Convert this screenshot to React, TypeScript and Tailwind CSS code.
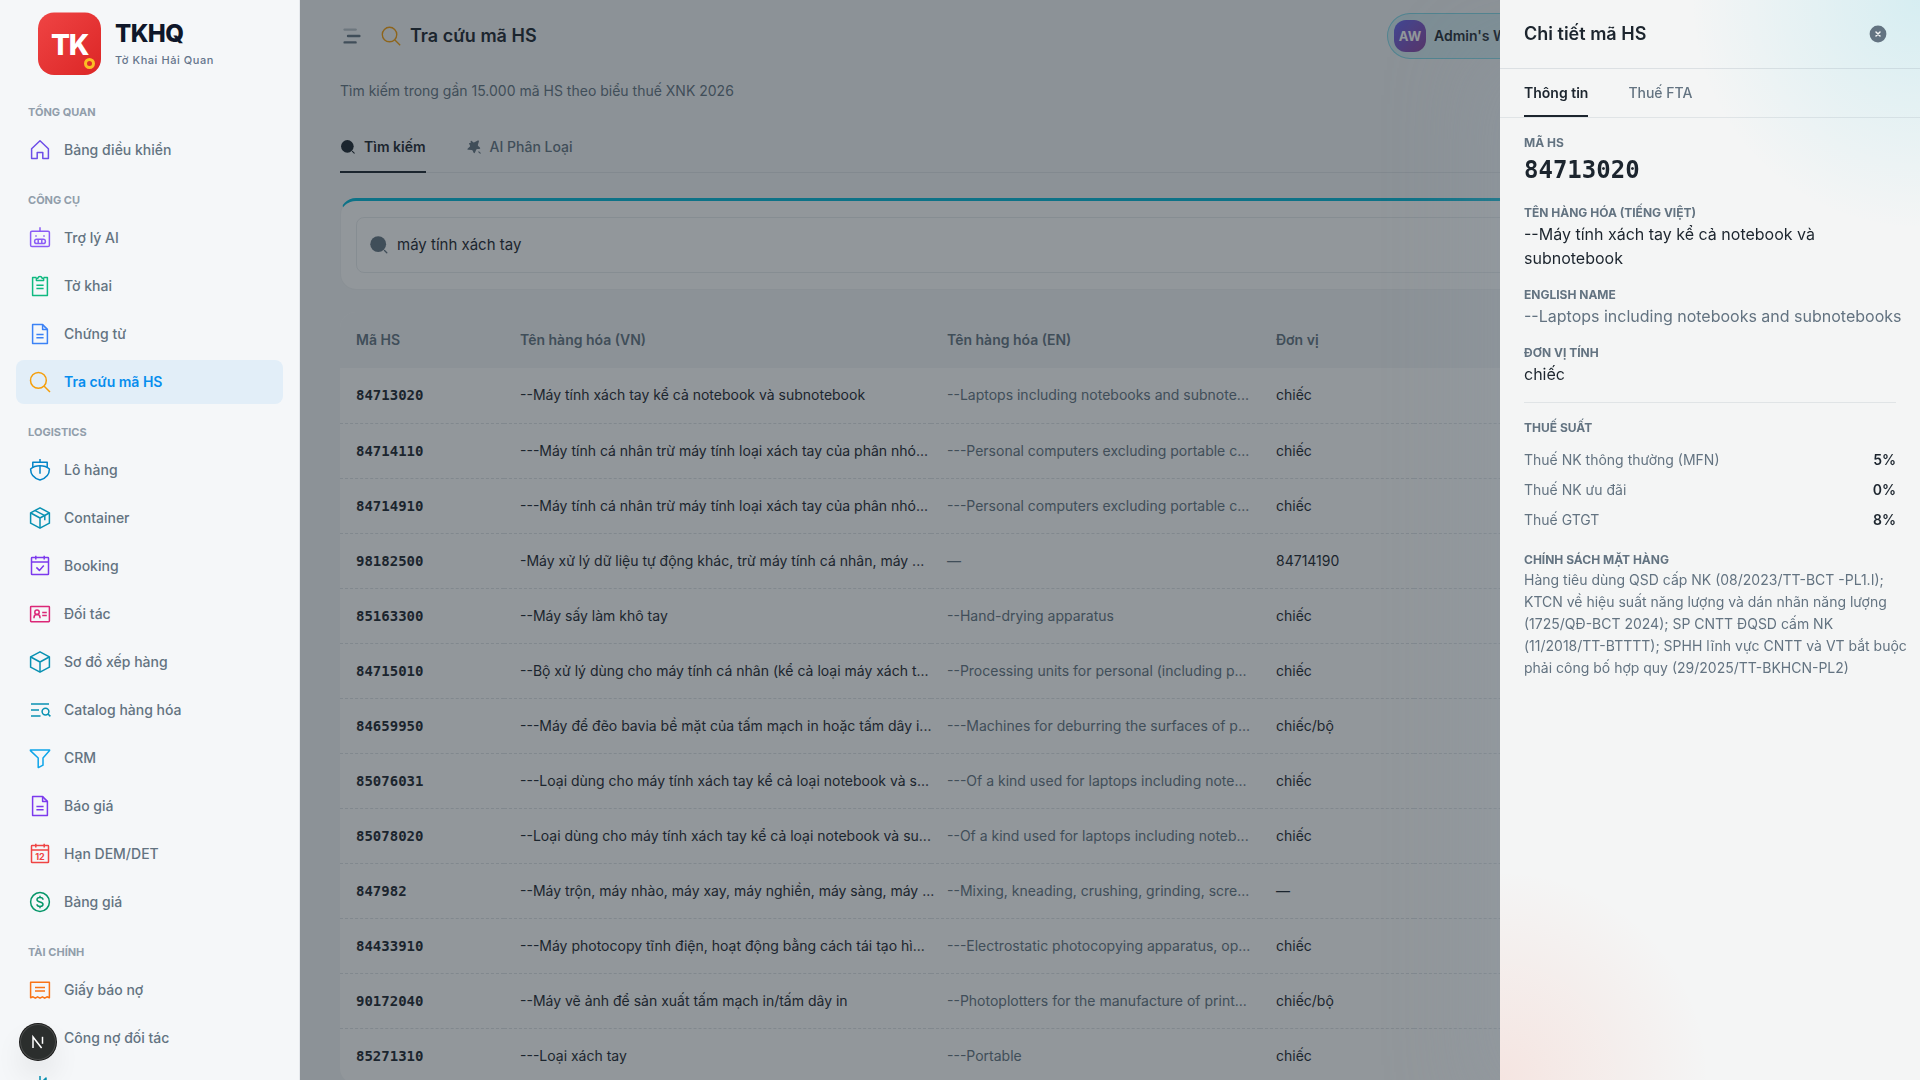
import { useState, type ReactNode } from "react";
import clsx from "clsx";

interface NavItem {
  label: string;
  color: string;
  icon: ReactNode;
  active?: boolean;
  iconOnly?: boolean;
}

interface NavGroup {
  title: string;
  items: NavItem[];
}

interface HsRow {
  code: string;
  vn: string;
  en: string;
  unit: string;
}

const DocGlyph = (
  <>
    <path d="M4.6 2.6h10l4.8 4.8v14H4.6z" />
    <path d="M14.6 2.6v4.8h4.8" />
    <path d="M8.4 12.6h7.2M8.4 15.8h7.2" />
  </>
);

const CubeGlyph = (
  <>
    <path d="M12 1.8 21.4 6.8v10.4L12 22.2 2.6 17.2V6.8z" />
    <path d="M2.8 7 12 12l9.2-5M12 12v10" />
  </>
);

const CalendarGlyph = (
  <>
    <rect x="3.5" y="3.6" width="17" height="17" rx="0.6" />
    <path d="M3.5 8h17M7.8 1.8v3.6M16.2 1.8v3.6" />
  </>
);

const SearchGlyph = (
  <>
    <circle cx="10.4" cy="10.4" r="7.9" />
    <path d="m16 16 6 6" />
  </>
);

const navGroups: NavGroup[] = [
  {
    title: "Tổng quan",
    items: [
      {
        label: "Bảng điều khiển",
        color: "text-[#6d4ee8]",
        icon: <path d="M3.6 20.6V10.8L12 2.8l8.4 8v9.8h-5.6v-6H9.2v6z" />,
      },
    ],
  },
  {
    title: "Công cụ",
    items: [
      {
        label: "Trợ lý AI",
        color: "text-[#8b5cf6]",
        icon: (
          <>
            <rect x="2.6" y="5.2" width="18.8" height="15.4" rx="1.4" />
            <path d="M12 1.2v4M8 9.2v1.6M16 9.2v1.6" />
            <rect x="6.6" y="13.2" width="10.8" height="4.4" rx="2.2" />
            <path d="M10.2 13.2v4.4M13.8 13.2v4.4" />
          </>
        ),
      },
      {
        label: "Tờ khai",
        color: "text-[#10b981]",
        icon: (
          <>
            <path d="M8.4 3.6H4.6v17.8h14.8V3.6h-3.8" />
            <path d="M8.4 6.4V4.2h1.4a2.3 2.3 0 0 1 4.4 0h1.4v2.2z" />
            <path d="M8.4 11.2h7.2M8.4 14.6h7.2" />
          </>
        ),
      },
      { label: "Chứng từ", color: "text-[#3b82f6]", icon: DocGlyph },
      { label: "Tra cứu mã HS", color: "text-[#f59e0b]", icon: SearchGlyph, active: true },
    ],
  },
  {
    title: "Logistics",
    items: [
      {
        label: "Lô hàng",
        color: "text-[#0284c7]",
        icon: (
          <>
            <path d="M12 1v3.2M4.8 9.4V4.2h14.4v5.2" />
            <path d="M12 7.8c3.8 0 7 1 9.4 3.2 0 5.6-3.6 9.4-9.4 11-5.8-1.6-9.4-5.4-9.4-11C5 8.800 8.200 7.800 12 7.800z" />
            <path d="M12 7.800v8" />
          </>
        ),
      },
      {
        label: "Container",
        color: "text-[#0891b2]",
        icon: (
          <>
            {CubeGlyph}
            <path d="m7.200 4.600 9.600 5v4.600" />
          </>
        ),
      },
      {
        label: "Booking",
        color: "text-[#7c3aed]",
        icon: (
          <>
            {CalendarGlyph}
            <path d="m8.400 13.400 3 3 4.400-4.800" />
          </>
        ),
      },
      {
        label: "Đối tác",
        color: "text-[#db2777]",
        icon: (
          <>
            <rect x="2.600" y="4.500" width="18.800" height="15.200" rx="0.600" />
            <circle cx="9" cy="10.200" r="2.200" />
            <path d="M6 16.200v-.8c0-1.700 1.200-3 3-3s3 1.300 3 3v.8M14.200 10.600h4.600M14.200 13.600h4.600" />
          </>
        ),
      },
      { label: "Sơ đồ xếp hàng", color: "text-[#0891b2]", icon: CubeGlyph },
      {
        label: "Catalog hàng hóa",
        color: "text-[#0891b2]",
        icon: (
          <>
            <path d="M3 6h18M3 12h8M3 18h9.500" />
            <circle cx="17.500" cy="13.600" r="3.400" />
            <path d="m20 16 2.400 2.400" />
          </>
        ),
      },
      {
        label: "CRM",
        color: "text-[#0ea5e9]",
        icon: <path d="M2.400 4h19.200v.6L15 12v7.200L10.800 21.400h-.6V12L2.400 4.600z" />,
      },
      { label: "Báo giá", color: "text-[#7c3aed]", icon: DocGlyph },
      {
        label: "Hạn DEM/DET",
        color: "text-[#ef4444]",
        icon: (
          <>
            {CalendarGlyph}
            <text
              x="12"
              y="18"
              textAnchor="middle"
              stroke="none"
              fill="currentColor"
              className="font-['Inter'] text-[9px] font-bold"
            >
              12
            </text>
          </>
        ),
      },
      {
        label: "Bảng giá",
        color: "text-[#059669]",
        icon: (
          <>
            <circle cx="12" cy="12" r="9.400" />
            <path d="M12 5.800v1.800M12 16.400v1.800M15 9.800c0-1.300-1-2.200-3-2.200s-3 .9-3 2.200c0 3 6 1.400 6 4.400 0 1.300-1 2.200-3 2.200s-3-.9-3-2.200" />
          </>
        ),
      },
    ],
  },
  {
    title: "Tài chính",
    items: [
      {
        label: "Giấy báo nợ",
        color: "text-[#f97316]",
        icon: (
          <>
            <path d="M2.600 19.800V4.200h18.800v15.600l-2.400-1-2.300 1.400-2.300-1.400-2.400 1.400-2.400-1.400-2.300 1.400L5 18.800z" />
            <path d="M7 9.600h10M7 13h10" />
          </>
        ),
      },
      { label: "Công nợ đối tác", color: "text-[#0891b2]", icon: <circle cx="12" cy="12" r="6" /> },
      {
        label: "Sổ quỹ",
        color: "text-[#0891b2]",
        icon: <path d="M2.600 21.400h18.800M6 18v-6M12 18V2M18 18V4l-3 3" />,
        iconOnly: true,
      },
    ],
  },
];

const rows: HsRow[] = [
  { code: "84713020", vn: "--Máy tính xách tay kể cả notebook và subnotebook", en: "--Laptops including notebooks and subnote...", unit: "chiếc" },
  { code: "84714110", vn: "---Máy tính cá nhân trừ máy tính loại xách tay của phân nhó...", en: "---Personal computers excluding portable c...", unit: "chiếc" },
  { code: "84714910", vn: "---Máy tính cá nhân trừ máy tính loại xách tay của phân nhó...", en: "---Personal computers excluding portable c...", unit: "chiếc" },
  { code: "98182500", vn: "-Máy xử lý dữ liệu tự động khác, trừ máy tính cá nhân, máy ...", en: "—", unit: "84714190" },
  { code: "85163300", vn: "--Máy sấy làm khô tay", en: "--Hand-drying apparatus", unit: "chiếc" },
  { code: "84715010", vn: "--Bộ xử lý dùng cho máy tính cá nhân (kể cả loại máy xách t...", en: "--Processing units for personal (including p...", unit: "chiếc" },
  { code: "84659950", vn: "---Máy để đẽo bavia bề mặt của tấm mạch in hoặc tấm dây i...", en: "---Machines for deburring the surfaces of p...", unit: "chiếc/bộ" },
  { code: "85076031", vn: "---Loại dùng cho máy tính xách tay kể cả loại notebook và s...", en: "---Of a kind used for laptops including note...", unit: "chiếc" },
  { code: "85078020", vn: "--Loại dùng cho máy tính xách tay kể cả loại notebook và su...", en: "--Of a kind used for laptops including noteb...", unit: "chiếc" },
  { code: "847982", vn: "--Máy trộn, máy nhào, máy xay, máy nghiền, máy sàng, máy ...", en: "--Mixing, kneading, crushing, grinding, scre...", unit: "—" },
  { code: "84433910", vn: "---Máy photocopy tĩnh điện, hoạt động bằng cách tái tạo hì...", en: "---Electrostatic photocopying apparatus, op...", unit: "chiếc" },
  { code: "90172040", vn: "--Máy vẽ ảnh để sản xuất tấm mạch in/tấm dây in", en: "--Photoplotters for the manufacture of print...", unit: "chiếc/bộ" },
  { code: "85271310", vn: "---Loại xách tay", en: "---Portable", unit: "chiếc" },
];

const taxRates = [
  { label: "Thuế NK thông thường (MFN)", value: "5%" },
  { label: "Thuế NK ưu đãi", value: "0%" },
  { label: "Thuế GTGT", value: "8%" },
];

function LineIcon({ className, children }: { className?: string; children: ReactNode }) {
  return (
    <svg
      viewBox="0 0 24 24"
      fill="none"
      stroke="currentColor"
      strokeWidth="1.500"
      strokeLinejoin="round"
      className={clsx("shrink-0", className)}
      aria-hidden="true"
    >
      {children}
    </svg>
  );
}

function SolidSearch({ className }: { className?: string }) {
  return (
    <svg viewBox="0 0 20 20" className={clsx("shrink-0", className)} aria-hidden="true">
      <circle cx="9.200" cy="9.200" r="7.900" fill="currentColor" />
      <path d="m15.500 15.500 2.300 2.300" stroke="currentColor" strokeWidth="1.300" strokeLinecap="round" />
    </svg>
  );
}

function Logo() {
  return (
    <svg viewBox="0 0 64 64" className="size-16 shrink-0" role="img" aria-label="TKHQ">
      <defs>
        <linearGradient id="logo-bg" x1="0" y1="0" x2="1" y2="1">
          <stop offset="0" stopColor="#ef4444" />
          <stop offset="1" stopColor="#dc2626" />
        </linearGradient>
      </defs>
      <rect x="1" y="0.500" width="63" height="62.500" rx="16" fill="url(#logo-bg)" />
      <text
        x="32.500"
        y="43"
        textAnchor="middle"
        fill="#fff"
        className="font-['Inter'] text-[28px] font-extrabold tracking-tighter"
      >
        TK
      </text>
      <circle cx="52.500" cy="51.500" r="4" fill="none" stroke="#fbbf24" strokeWidth="3" />
    </svg>
  );
}

function Sidebar() {
  return (
    <aside className="flex w-[300px] shrink-0 flex-col overflow-hidden border-r border-[#e6e9ed] bg-[#f5f7f9]">
      <div className="flex h-[88px] shrink-0 items-center gap-3.5 pl-[37px]">
        <Logo />
        <div className="flex flex-col gap-1">
          <span className="text-2xl leading-7 font-extrabold tracking-tight text-[#0f172a]">TKHQ</span>
          <span className="text-[11px] leading-4 font-medium tracking-wider text-[#64748b]">Tờ Khai Hải Quan</span>
        </div>
      </div>
      <nav className="px-4">
        {navGroups.map((group) => (
          <div key={group.title}>
            <div className="px-3 pt-4 pb-2 text-[11px] leading-4 font-bold text-[#919eab] uppercase">
              {group.title}
            </div>
            {group.items.map((item) => (
              <a
                key={item.label}
                href="#"
                aria-label={item.label}
                className={clsx(
                  "mb-1 flex h-11 items-center gap-3 rounded-lg px-3 text-sm",
                  item.active ? "bg-[#078dee]/8 font-semibold text-[#078dee]" : "font-medium text-[#637381]"
                )}
              >
                <LineIcon className={clsx("size-6", item.color)}>{item.icon}</LineIcon>
                {!item.iconOnly && item.label}
              </a>
            ))}
          </div>
        ))}
      </nav>
    </aside>
  );
}

function TopBar() {
  return (
    <header className="flex h-[72px] shrink-0 items-center">
      <button type="button" aria-label="Menu" className="mr-4 text-[#637381]">
        <svg viewBox="0 0 24 24" className="size-6" stroke="currentColor" strokeWidth="2.400" strokeLinecap="round">
          <path d="M4.600 5.600h11" opacity="0.4" />
          <path d="M8 12h11.400M4.600 18.400h11" />
        </svg>
      </button>
      <h1 className="flex items-center gap-2 text-lg font-semibold text-[#1c252e]">
        <LineIcon className="size-[22px] text-[#f59e0b]">{SearchGlyph}</LineIcon>
        Tra cứu mã HS
      </h1>
      <button
        type="button"
        className="mr-[273px] ml-auto flex h-[46px] w-[220px] items-center gap-2 rounded-full border border-[#00b8d9]/40 bg-[#00b8d9]/12 pl-1.5 text-sm font-semibold whitespace-nowrap text-[#1c252e]"
      >
        <span className="flex size-8 items-center justify-center rounded-xl bg-linear-to-br from-[#6366f1] to-[#8b3f9e] text-[13px] font-bold text-white">
          AW
        </span>
        Admin's W
      </button>
    </header>
  );
}

function ResultsTable() {
  return (
    <div className="mt-[22px] overflow-hidden rounded-2xl bg-white">
      <table className="w-full table-fixed border-collapse text-left text-sm whitespace-nowrap">
        <colgroup>
          <col className="w-[164px]" />
          <col className="w-[427px]" />
          <col className="w-[329px]" />
          <col className="w-[154px]" />
          <col />
        </colgroup>
        <thead className="bg-[#f4f6f8] text-[#637381]">
          <tr className="h-14">
            <th className="px-4 font-semibold">Mã HS</th>
            <th className="px-4 font-semibold">Tên hàng hóa (VN)</th>
            <th className="px-4 font-semibold">Tên hàng hóa (EN)</th>
            <th className="px-4 font-semibold">Đơn vị</th>
            <th />
          </tr>
        </thead>
        <tbody className="text-[#1c252e]">
          {rows.map((row) => (
            <tr key={row.code} className="h-[55px] border-b border-dashed border-[#919eab]/30">
              <td className="px-4 font-['DejaVu_Sans_Mono'] font-bold">{row.code}</td>
              <td className="px-4">{row.vn}</td>
              <td className="px-4 text-[#637381]">{row.en}</td>
              <td className="px-4">{row.unit}</td>
              <td />
            </tr>
          ))}
        </tbody>
      </table>
    </div>
  );
}

function Content() {
  const [query, setQuery] = useState("máy tính xách tay");

  return (
    <main className="relative min-w-0 flex-1 overflow-hidden bg-[#f4f6f8] px-10">
      <TopBar />
      <p className="mt-2 text-sm leading-[22px] text-[#637381]">
        Tìm kiếm trong gần 15.000 mã HS theo biểu thuế XNK 2026
      </p>
      <div className="mt-5 flex gap-10 border-b border-[#919eab]/20 text-sm">
        <button
          type="button"
          className="-mb-px flex h-[51px] items-center gap-2 border-b-2 border-[#1c252e] font-semibold text-[#1c252e]"
        >
          <SolidSearch className="size-4" />
          Tìm kiếm
        </button>
        <button type="button" className="flex h-[49px] items-center gap-2 font-medium text-[#637381]">
          <svg viewBox="0 0 16 16" className="size-4 shrink-0" fill="currentColor" aria-hidden="true">
            <path d="M4.600 2.600c-.1-.8.5-1.100 1.100-.6l1.600 1.200c.4.3.8.3 1.200.1l3.200-1.700c.9-.5 1.500 0 1.200 1l-1 3.100c-.1.5-.1.8.3 1.200l1.700 1.700c.6.7.3 1.300-.6 1.300l-2 .1c-.5 0-.8.2-1 .6l-1.300 3c-.4.9-1.100.9-1.500 0l-.9-2c-.2-.5-.5-.7-1-.7l-3.200-.1c-1 0-1.300-.7-.6-1.400l1.900-1.700c.4-.4.5-.7.3-1.200l-.8-1.400c-.4-.8 0-1.300.8-1.200.5.1.7-.1.700-.5z" />
            <path d="m12.800 12.800 1.400 1.400" stroke="currentColor" strokeWidth="1.100" strokeLinecap="round" />
          </svg>
          AI Phân Loại
        </button>
      </div>
      <div className="mt-[25px] rounded-2xl border border-t-3 border-[#919eab]/15 border-t-[#00b8d9] bg-white px-[15px] py-4">
        <label className="flex h-14 items-center gap-2 rounded-lg border border-[#919eab]/20 px-3 text-[#637381]">
          <SolidSearch className="size-5" />
          <input
            type="text"
            aria-label="Tìm kiếm mã HS"
            value={query}
            onChange={(e) => setQuery(e.target.value)}
            className="min-w-0 flex-1 bg-transparent text-[15px] text-[#1c252e] outline-none"
          />
        </label>
      </div>
      <ResultsTable />
      <div className="absolute inset-0 bg-[#1c252e]/48" />
    </main>
  );
}

function Field({ label, children }: { label: string; children: ReactNode }) {
  return (
    <div>
      <div className="text-xs leading-[18px] font-bold text-[#637381] uppercase">{label}</div>
      {children}
    </div>
  );
}

function DetailDrawer() {
  return (
    <section
      aria-label="Chi tiết mã HS"
      className="fixed inset-y-0 right-0 w-[420px] bg-[#f4f5f5] bg-[radial-gradient(circle_at_100%_0,rgba(0,184,217,0.12),transparent_230px),radial-gradient(circle_at_0_100%,rgba(255,86,48,0.1),transparent_210px)] shadow-[-40px_40px_80px_-8px_rgba(145,158,171,0.24)]"
    >
      <div className="flex h-[69px] items-center justify-between border-b border-[#919eab]/24 px-6">
        <h2 className="text-lg font-semibold text-[#1c252e]">Chi tiết mã HS</h2>
        <button type="button" aria-label="Đóng" className="flex size-9 items-center justify-center">
          <svg viewBox="0 0 20 20" className="size-5">
            <circle cx="10" cy="10" r="8.400" fill="#637381" />
            <path d="m8 8 4 4m0-4-4 4" stroke="#f4f5f5" strokeWidth="1.500" strokeLinecap="round" />
          </svg>
        </button>
      </div>
      <div className="flex h-[49px] gap-10 border-b border-[#919eab]/20 px-6 text-sm">
        <button type="button" className="border-b-2 border-[#1c252e] pt-0.5 font-semibold text-[#1c252e]">
          Thông tin
        </button>
        <button type="button" className="font-medium text-[#637381]">
          Thuế FTA
        </button>
      </div>
      <div className="flex flex-col gap-4 px-6 py-4">
        <Field label="Mã HS">
          <div className="font-['DejaVu_Sans_Mono'] text-2xl leading-9 font-bold text-[#1c252e]">84713020</div>
        </Field>
        <Field label="Tên hàng hóa (Tiếng Việt)">
          <p className="text-base text-[#1c252e]">--Máy tính xách tay kể cả notebook và subnotebook</p>
        </Field>
        <Field label="English name">
          <p className="text-base whitespace-nowrap text-[#637381]">--Laptops including notebooks and subnotebooks</p>
        </Field>
        <Field label="Đơn vị tính">
          <p className="text-base text-[#1c252e]">chiếc</p>
        </Field>
        <hr className="border-[#919eab]/20" />
        <Field label="Thuế suất">
          <dl className="mt-2 text-sm leading-[22px]">
            {taxRates.map((tax) => (
              <div key={tax.label} className="flex justify-between py-1">
                <dt className="text-[#637381]">{tax.label}</dt>
                <dd className="font-semibold text-[#1c252e]">{tax.value}</dd>
              </div>
            ))}
          </dl>
        </Field>
        <Field label="Chính sách mặt hàng">
          <p className="-mr-4 text-sm leading-[22px] text-[#637381]">
            Hàng tiêu dùng QSD cấp NK (08/2023/TT-BCT -PL1.I); KTCN về hiệu suất năng lượng và dán nhãn năng lượng
            (1725/QĐ-BCT 2024); SP CNTT ĐQSD cấm NK (11/2018/TT-BTTTT); SPHH lĩnh vực CNTT và VT bắt buộc phải công bố
            hợp quy (29/2025/TT-BKHCN-PL2)
          </p>
        </Field>
      </div>
    </section>
  );
}

export default function App() {
  return (
    <div className="flex h-screen overflow-hidden font-['Inter',sans-serif]">
      <Sidebar />
      <Content />
      <DetailDrawer />
      <button
        type="button"
        aria-label="Next.js"
        className="fixed bottom-5 left-5 flex size-9 items-center justify-center rounded-full bg-[#2b2e2d] shadow-[0_0_0_1px_#171717,inset_0_0_0_1px_rgba(255,255,255,0.15),0_16px_32px_-8px_rgba(0,0,0,0.24)]"
      >
        <svg viewBox="0 0 16 16" className="size-4" fill="none" stroke="#fff" strokeWidth="1.500">
          <path d="M3 14V3l8.600 11" />
          <path d="M12.500 2.800v7" />
        </svg>
      </button>
    </div>
  );
}
